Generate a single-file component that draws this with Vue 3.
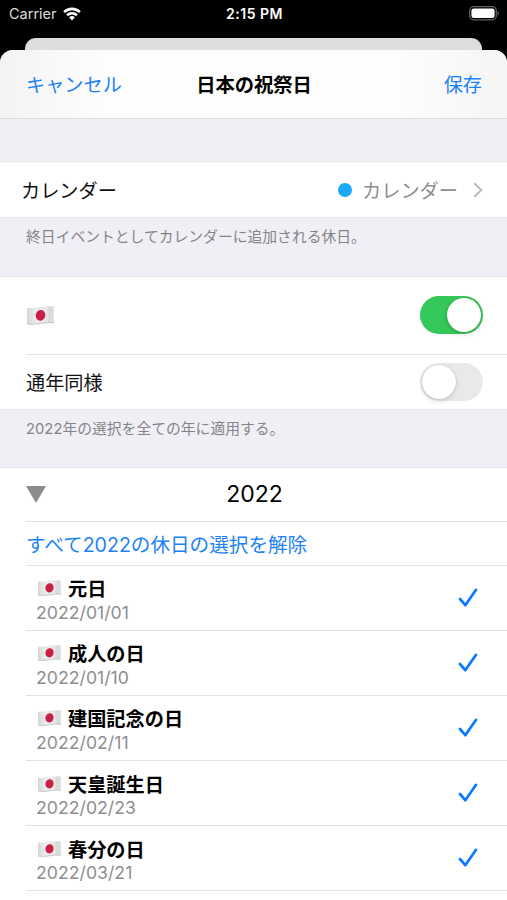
<template>
  <div class="screen">
    <div class="status">
      <div class="carrier">
        <span>Carrier</span>
        <svg class="wifi" viewBox="0 0 18 14">
          <path d="M0.2 4.2A12.6 12.6 0 0 1 17.8 4.2L16 6.1A10 10 0 0 0 2 6.1Z" />
          <path d="M3.1 7.3A8.4 8.4 0 0 1 14.9 7.3L13 9.2A5.8 5.8 0 0 0 5 9.2Z" />
          <path d="M6.1 10.3A4.2 4.2 0 0 1 11.9 10.3L9 13.4Z" />
        </svg>
      </div>
      <span class="time">2:15 PM</span>
      <svg class="battery" viewBox="0 0 31 15">
        <rect x="0.7" y="0.7" width="26.6" height="13.1" rx="4" fill="none" stroke="#626262" stroke-width="1.3" />
        <rect x="2.4" y="2.4" width="23.2" height="9.7" rx="2.4" fill="#fff" />
        <path d="M28.6 5v4.6c1.8-.7 1.8-3.9 0-4.6z" fill="#626262" />
      </svg>
    </div>
    <div class="behind"></div>

    <div class="sheet">
      <header class="navbar">
        <a class="action">キャンセル</a>
        <h1>日本の祝祭日</h1>
        <a class="action right">保存</a>
      </header>

      <div class="spacer"></div>

      <div class="row calendar">
        <span class="label">カレンダー</span>
        <span class="dot"></span>
        <span class="value">カレンダー</span>
        <svg class="chevron" viewBox="0 0 10 16">
          <path d="M1.3 1.3L8.3 8L1.3 14.7" />
        </svg>
      </div>
      <p class="note">終日イベントとしてカレンダーに追加される休日。</p>

      <div class="row country">
        <svg class="flag large" viewBox="0 0 26 18">
          <defs>
            <linearGradient id="cloth">
              <stop offset="0" stop-color="#d6d6d6" />
              <stop offset="0.3" stop-color="#ececec" />
              <stop offset="0.7" stop-color="#e8e8e8" />
              <stop offset="0.85" stop-color="#d8d8d8" />
              <stop offset="1" stop-color="#e2e2e2" />
            </linearGradient>
          </defs>
          <path d="M0 1.6C4 2.2 8 1.6 12 .9S21 0 26 .4V16.4C22 15.8 17 16.2 13 17S5 18 0 17.3Z" fill="url(#cloth)" />
          <path d="M0 17C5 17.7 9 17.4 13 16.7S22 15.6 26 16.1" fill="none" stroke="#bdbdbd" stroke-width=".8" />
          <ellipse cx="13" cy="8.8" rx="4.6" ry="5.2" transform="rotate(14 13 8.8)" fill="#cb1f45" />
        </svg>
        <span class="switch" :class="{ on: country }" @click="country = !country"></span>
      </div>
      <div class="row every-year">
        <span class="label">通年同様</span>
        <span class="switch" :class="{ on: everyYear }" @click="everyYear = !everyYear"></span>
      </div>
      <p class="note second">2022年の選択を全ての年に適用する。</p>

      <div class="row year">
        <svg class="triangle" viewBox="0 0 20 17">
          <path d="M0 0H20L10 17Z" />
        </svg>
        <span class="year-title">2022</span>
      </div>
      <div class="row deselect">
        <a class="action">すべて2022の休日の選択を解除</a>
      </div>

      <ul class="holidays">
        <li v-for="holiday in holidays" :key="holiday.date">
          <div class="info">
            <div class="name">
              <svg class="flag" viewBox="0 0 26 18">
                <path d="M0 1.6C4 2.2 8 1.6 12 .9S21 0 26 .4V16.4C22 15.8 17 16.2 13 17S5 18 0 17.3Z" fill="url(#cloth)" />
                <path d="M0 17C5 17.7 9 17.4 13 16.7S22 15.6 26 16.1" fill="none" stroke="#bdbdbd" stroke-width=".8" />
                <ellipse cx="13" cy="8.8" rx="4.6" ry="5.2" transform="rotate(14 13 8.8)" fill="#cb1f45" />
              </svg>
              <span>{{ holiday.name }}</span>
            </div>
            <div class="date">{{ holiday.date }}</div>
          </div>
          <svg class="check" viewBox="0 0 20 20">
            <path d="M2 11L7.3 17.2L18 1.8" />
          </svg>
        </li>
      </ul>
    </div>
  </div>
</template>

<script setup>
import { ref } from 'vue';

const country = ref(true);
const everyYear = ref(false);

const holidays = [
  { name: '元日', date: '2022/01/01' },
  { name: '成人の日', date: '2022/01/10' },
  { name: '建国記念の日', date: '2022/02/11' },
  { name: '天皇誕生日', date: '2022/02/23' },
  { name: '春分の日', date: '2022/03/21' }
];
</script>

<style>
body {
  background: #000;
}
</style>

<style scoped>
.screen {
  width: 507px;
  height: 900px;
  overflow: hidden;
  background: #000;
  color: #111;
  font-family: Inter, "Noto Sans CJK JP", sans-serif;
  font-size: 19.2px;
}

.status {
  display: grid;
  grid-template-columns: 1fr auto 1fr;
  align-items: center;
  height: 27px;
  padding: 0 7px 0 9px;
  margin-bottom: 11px;
  color: #fff;
  font-size: 14px;
  box-sizing: border-box;
}

.carrier {
  display: flex;
  align-items: center;
  gap: 6px;
  color: #dcdcdc;
  font-size: 14.5px;
}

.wifi {
  width: 18px;
  height: 14px;
  fill: #fff;
}

.time {
  font-weight: 600;
  letter-spacing: 0.5px;
}

.battery {
  width: 31px;
  height: 15px;
  justify-self: end;
}

.behind {
  height: 12px;
  margin: 0 25px;
  background: #dedede;
  border-radius: 11px 11px 0 0;
}

.sheet {
  height: 850px;
  overflow: hidden;
  background: #fff;
  border-radius: 13px 13px 0 0;
}

.navbar {
  display: grid;
  grid-template-columns: 1fr auto 1fr;
  align-items: center;
  height: 69px;
  padding: 0 25px 0 26px;
  box-sizing: border-box;
  border-bottom: 1px solid #dcdce0;
  background: linear-gradient(90deg, #f3f3f3 0, #fdfdfd 100px, #fdfdfd 400px, #f5f5f5 100%);
}

h1 {
  margin: 0;
  color: #000;
  font-size: 19.3px;
  font-weight: 600;
}

.action {
  color: #1c82f5;
}

.right {
  text-align: right;
}

.spacer {
  height: 42px;
  background: #f0eff5;
  border-bottom: 1px solid #e6e6ea;
}

.row {
  display: flex;
  align-items: center;
  box-sizing: border-box;
  padding: 0 24px 0 26px;
}

.calendar {
  height: 55px;
  padding-left: 21px;
}

.label {
  margin-right: auto;
}

.dot {
  width: 14px;
  height: 14px;
  margin-right: 10px;
  border-radius: 50%;
  background: #18a9f8;
}

.value {
  color: #8e8e90;
}

.chevron {
  width: 10px;
  height: 16px;
  margin-left: 15px;
}

.chevron path {
  fill: none;
  stroke: #bcbcbf;
  stroke-width: 2;
}

.note {
  height: 60px;
  margin: 0;
  padding: 8px 26px 0;
  box-sizing: border-box;
  border-top: 1px solid #e6e6ea;
  border-bottom: 1px solid #e6e6ea;
  background: #f0eff5;
  color: #858589;
  font-size: 14.8px;
  line-height: 22px;
}

.country {
  height: 76.5px;
  justify-content: space-between;
}

.every-year {
  height: 55px;
  margin-left: 26px;
  padding-left: 0;
  border-top: 1px solid #e2e2e4;
}

.second {
  height: 59px;
}

.flag {
  width: 23px;
  height: 16px;
}

.large {
  width: 27px;
  height: 19px;
  margin-left: 1px;
}

.switch {
  width: 63px;
  height: 38px;
  padding: 2px;
  box-sizing: border-box;
  border-radius: 19px;
  background: #e9e9ea;
}

.switch::before {
  content: "";
  display: block;
  width: 34px;
  height: 34px;
  border-radius: 50%;
  background: #fff;
  box-shadow: 0 2px 5px rgba(0, 0, 0, 0.15), 0 0 1px rgba(0, 0, 0, 0.2);
}

.on {
  background: #34c759;
}

.on::before {
  margin-left: 25px;
}

.year {
  display: grid;
  grid-template-columns: 1fr auto 1fr;
  height: 53px;
  padding-right: 24px;
}

.triangle {
  width: 20px;
  height: 17px;
  fill: #8c8c8c;
}

.year-title {
  color: #000;
  font-size: 23px;
}

.deselect {
  height: 44px;
  margin-left: 26px;
  padding: 0;
  border-top: 1px solid #e2e2e4;
  font-size: 19.6px;
}

.holidays {
  margin: 0 0 0 26px;
  padding: 0;
  list-style: none;
  border-bottom: 1px solid #e2e2e4;
}

.holidays li {
  display: flex;
  align-items: center;
  justify-content: space-between;
  height: 65.2px;
  padding: 0 29px 0 10px;
  box-sizing: border-box;
  border-top: 1px solid #e2e2e4;
}

.info {
  padding-top: 4px;
}

.name {
  display: flex;
  align-items: center;
  gap: 7px;
  height: 25px;
  padding-left: 2px;
  color: #000;
  font-weight: 600;
}

.date {
  height: 23px;
  color: #8e8e90;
  font-size: 17.7px;
  line-height: 24px;
}

.check {
  width: 20px;
  height: 20px;
}

.check path {
  fill: none;
  stroke: #087aff;
  stroke-width: 2.7;
  stroke-linecap: round;
  stroke-linejoin: round;
}
</style>
